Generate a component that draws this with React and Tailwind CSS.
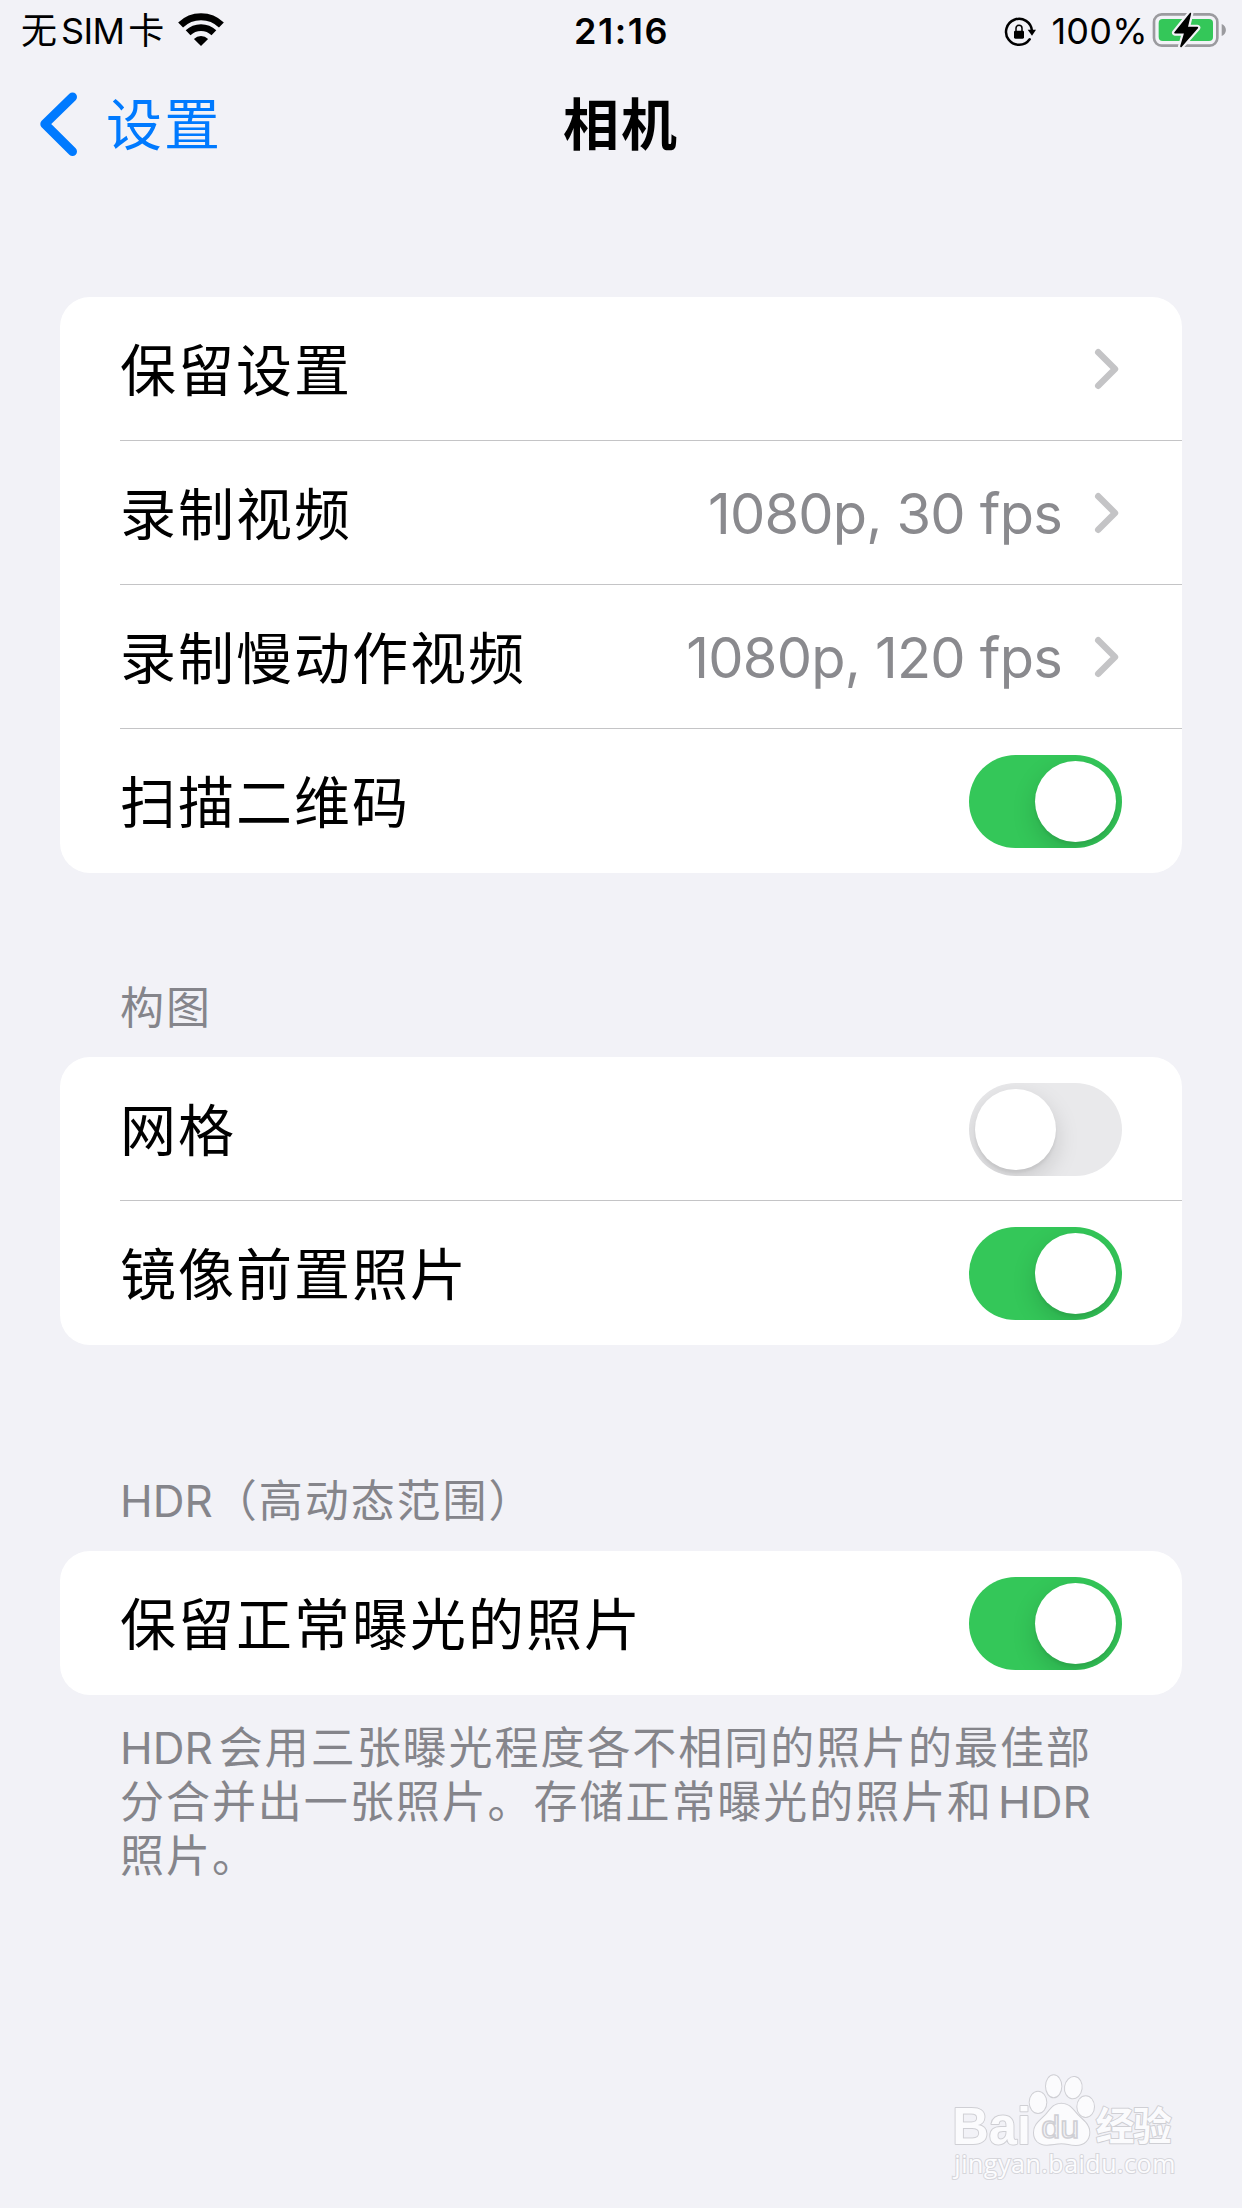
import React from 'react';

function WifiIcon() {
  return (
    <svg className="h-[36px] w-[48px] shrink-0" viewBox="0 0 48 36" fill="none">
      <path d="M3.6 13.1A29.3 29.3 0 0 1 44.4 13.1" stroke="#000" strokeWidth="7" />
      <path d="M11.1 20.8A18.5 18.5 0 0 1 36.9 20.8" stroke="#000" strokeWidth="6.8" />
      <path d="M24 34L16.9 26.9A10.2 10.2 0 0 1 31.1 26.9Z" fill="#000" />
    </svg>
  );
}

function RotationLockIcon() {
  return (
    <svg className="h-[32px] w-[33px] shrink-0" viewBox="72 47 99 96" fill="none">
      <path d="M156 92A39 39 0 1 0 149 117" stroke="#000" strokeWidth="7.5" strokeLinecap="round" />
      <path d="M143 88H168L156 106Z" fill="#000" />
      <rect x="102" y="91" width="30" height="24" rx="4" fill="#000" />
      <path d="M108 92V84a9 9 0 0 1 18 0V92" stroke="#000" strokeWidth="4.5" />
    </svg>
  );
}

function BatteryIcon() {
  const bolt = 'M632 41L586 98H616L604 139L653 83H622Z';
  return (
    <svg className="h-[36px] w-[75px] shrink-0" viewBox="517 36 225 108" fill="none">
      <rect x="523" y="43" width="190" height="94" rx="23" stroke="#9b9b9f" strokeWidth="8" />
      <path d="M726 72C743 79 743 101 726 108Z" fill="#9b9b9f" />
      <rect x="537" y="57" width="163" height="66" rx="12" fill="#34c759" />
      <path d={bolt} stroke="#f2f2f7" strokeWidth="18" strokeLinejoin="round" />
      <path d={bolt} fill="#000" stroke="#000" strokeWidth="5" strokeLinejoin="round" />
    </svg>
  );
}

function StatusBar() {
  return (
    <div className="grid h-[62px] grid-cols-[1fr_auto_1fr] items-center pl-[21px] pr-[15px] text-[36px] leading-[60px] text-black">
      <div className="flex items-center">
        <span>无</span>
        <span className="ml-[4px] tracking-[-0.7px]">SIM</span>
        <span className="ml-[4px]">卡</span>
        <span className="ml-[13px] mb-[2px] flex"><WifiIcon /></span>
      </div>
      <div className="pr-[5px] font-semibold tracking-[1.5px]">21:16</div>
      <div className="flex items-center justify-end">
        <span className="mt-[2px] flex"><RotationLockIcon /></span>
        <span className="ml-[14px] tracking-[0.3px]">100%</span>
        <span className="ml-[4px] mb-[2px] flex"><BatteryIcon /></span>
      </div>
    </div>
  );
}

function NavBar() {
  return (
    <div className="grid h-[126px] grid-cols-[1fr_auto_1fr] items-center text-[56px] leading-[80px] tracking-[2px]">
      <div className="flex items-center pl-[38px] text-[#007aff]">
        <svg className="mb-[2px] h-[66px] w-[42px]" viewBox="0 0 42 66" fill="none">
          <path d="M34.5 6L6.8 33L34.5 60.5" stroke="currentColor" strokeWidth="9" strokeLinecap="round" strokeLinejoin="round" />
        </svg>
        <span className="ml-[26px]">设置</span>
      </div>
      <h1 className="font-semibold text-black">相机</h1>
    </div>
  );
}

function Toggle({ on }) {
  return (
    <div className={`flex h-[93px] w-[153px] shrink-0 overflow-hidden rounded-full p-[6px] ${on ? 'justify-end bg-[#34c759]' : 'justify-start bg-[#e9e9eb]'}`}>
      <div className="size-[81px] rounded-full bg-white shadow-[0_9px_24px_rgba(0,0,0,0.15),0_3px_3px_rgba(0,0,0,0.06)]" />
    </div>
  );
}

function Chevron() {
  return (
    <svg className="mb-[2px] ml-[32px] mr-[2px] h-[42px] w-[26px]" viewBox="0 0 26 42" fill="none">
      <path d="M4.2 4.2L21 21L4.2 37.8" stroke="#c4c4c6" strokeWidth="6.4" strokeLinecap="round" strokeLinejoin="round" />
    </svg>
  );
}

function Row({ label, value, toggle, last }) {
  return (
    <div className="pl-[60px]">
      <div className={`flex h-[144px] items-center justify-between pr-[60px] ${last ? 'pt-px' : 'border-b border-[#c4c4c6] pt-[2px]'}`}>
        <span className="pt-[2px] text-[56px] leading-[80px] tracking-[2px] text-black">{label}</span>
        {toggle !== undefined ? (
          <Toggle on={toggle} />
        ) : (
          <div className="flex items-center">
            {value && <span className="text-[56px] leading-[80px] tracking-[-0.8px] text-[#8a8a8e]">{value}</span>}
            <Chevron />
          </div>
        )}
      </div>
    </div>
  );
}

function Card({ children }) {
  return <div className="mx-[60px] overflow-hidden rounded-[30px] bg-white">{children}</div>;
}

function SectionHeader({ children, className }) {
  return (
    <h2 className={`ml-[120px] text-[44px] leading-[54px] tracking-[1.95px] text-[#85858b] ${className}`}>{children}</h2>
  );
}

function Watermark() {
  const art = { fill: '#fbfbfd', stroke: '#cfcfd4', strokeWidth: 6, paintOrder: 'stroke', strokeLinejoin: 'round' };
  return (
    <svg className="mb-[24px] mr-[62px] mt-auto h-[114px] w-[230px] self-end" viewBox="90 60 690 342">
      <g {...art}>
        <text x="97" y="281" fontSize="158" textLength="236" lengthAdjust="spacingAndGlyphs" className="font-['Liberation_Sans'] font-bold">Bai</text>
        <ellipse cx="354" cy="157" rx="25" ry="32" />
        <ellipse cx="401" cy="109" rx="23" ry="33" />
        <ellipse cx="460" cy="113" rx="25" ry="32" transform="rotate(8 460 113)" />
        <ellipse cx="497" cy="170" rx="25" ry="31" />
        <path d="M424 161C448 161 458 178 472 194C488 211 508 222 508 247C508 270 492 285 468 285C450 285 440 280 424 280C408 280 398 284 380 284C356 284 342 269 342 248C342 222 362 211 378 194C392 178 400 161 424 161Z" />
        <text x="527" y="271" fontSize="116" textLength="228" className="font-['Noto_Sans_CJK_SC'] font-bold">经验</text>
      </g>
      <text x="364" y="263" fontSize="94" textLength="114" lengthAdjust="spacingAndGlyphs" fill="#f4f4f7" stroke="#cfcfd4" strokeWidth="4.5" className="font-['Liberation_Sans']">du</text>
      <text x="103" y="370" fontSize="75" textLength="663" fill="#fcfcfe" stroke="#d6d6db" strokeWidth="6" paintOrder="stroke" className="font-['Open_Sans']">jingyan.baidu.com</text>
    </svg>
  );
}

export default function App() {
  return (
    <div className="flex h-[2208px] w-[1242px] flex-col overflow-hidden bg-[#f2f2f7] font-['Inter','Noto_Sans_CJK_SC',sans-serif]">
      <StatusBar />
      <NavBar />
      <div className="h-[109px] shrink-0" />
      <Card>
        <Row label="保留设置" />
        <Row label="录制视频" value="1080p, 30 fps" />
        <Row label="录制慢动作视频" value="1080p, 120 fps" />
        <Row label="扫描二维码" toggle={true} last />
      </Card>
      <SectionHeader className="mb-[22px] mt-[108px]">构图</SectionHeader>
      <Card>
        <Row label="网格" toggle={false} />
        <Row label="镜像前置照片" toggle={true} last />
      </Card>
      <SectionHeader className="mb-[23px] mt-[129px]">
        <span className="tracking-normal">HDR</span>（高动态范围）
      </SectionHeader>
      <Card>
        <Row label="保留正常曝光的照片" toggle={true} last />
      </Card>
      <p className="ml-[120px] mt-[26px] whitespace-nowrap text-[44px] leading-[54px] tracking-[1.95px] text-[#85858b]">
        <span className="mr-[6px] tracking-normal">HDR</span>会用三张曝光程度各不相同的照片的最佳部
        <br />
        分合并出一张照片。存储正常曝光的照片和<span className="ml-[5px] tracking-normal">HDR</span>
        <br />
        照片。
      </p>
      <Watermark />
    </div>
  );
}
